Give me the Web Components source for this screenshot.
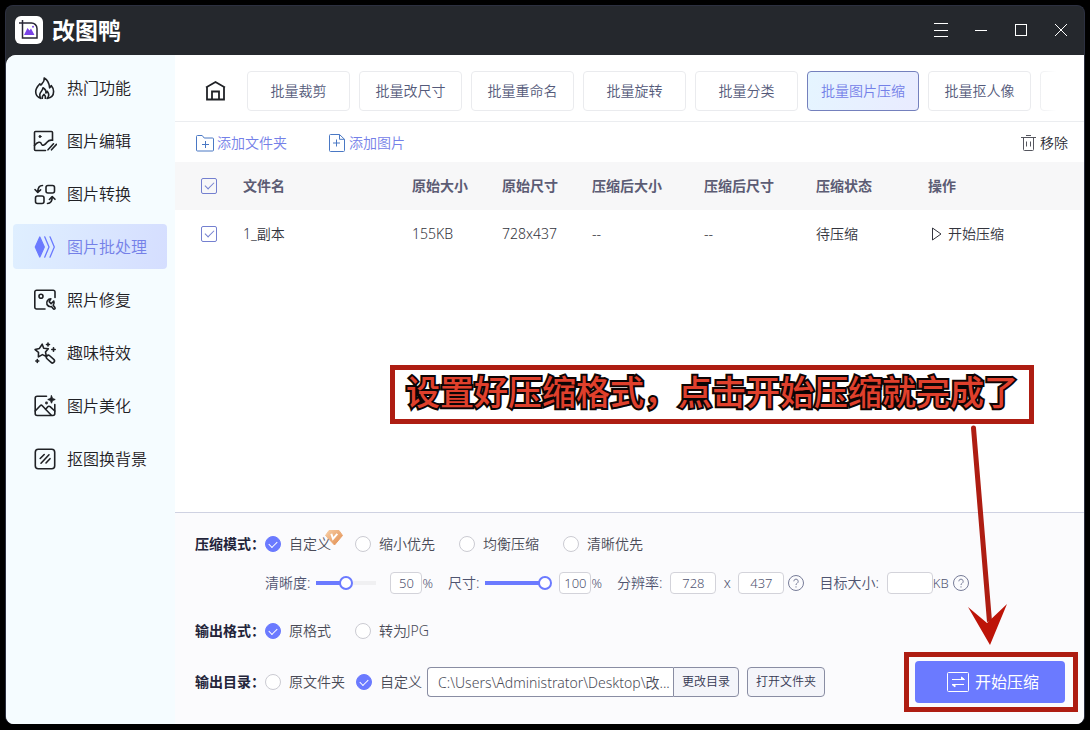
<!DOCTYPE html>
<html lang="zh-CN">
<head>
<meta charset="utf-8">
<meta name="viewport" content="width=device-width, initial-scale=1">
<title>改图鸭</title>
<style>
  body {
    margin: 0;
    background: #000;
    font-family: "Noto Sans", "Noto Sans CJK SC", sans-serif;
    font-size: 14px;
    font-weight: 350;
    line-height: 20px;
    color: #33343d;
    --accent: #6b7aff;
    --mark: #ae1d12;
  }
</style>
</head>
<body>
<app-window>
  <title-bar slot="title">改图鸭</title-bar>
  <side-nav slot="side">
    <nav-item icon="fire">热门功能</nav-item>
    <nav-item icon="edit">图片编辑</nav-item>
    <nav-item icon="convert">图片转换</nav-item>
    <nav-item icon="batch" active>图片批处理</nav-item>
    <nav-item icon="repair">照片修复</nav-item>
    <nav-item icon="magic">趣味特效</nav-item>
    <nav-item icon="beauty">图片美化</nav-item>
    <nav-item icon="cutout">抠图换背景</nav-item>
  </side-nav>
  <tab-strip>
    <tab-item>批量裁剪</tab-item>
    <tab-item>批量改尺寸</tab-item>
    <tab-item>批量重命名</tab-item>
    <tab-item>批量旋转</tab-item>
    <tab-item>批量分类</tab-item>
    <tab-item active>批量图片压缩</tab-item>
    <tab-item>批量抠人像</tab-item>
    <tab-item></tab-item>
  </tab-strip>
  <file-toolbar></file-toolbar>
  <file-table></file-table>
  <compress-settings></compress-settings>
  <guide-note slot="overlay">设置好压缩格式，点击开始压缩就完成了</guide-note>
</app-window>

<script>
const ICONS = {
  fire: `<path d="M11.200 2c.5 2.800-1 4.300-2.400 6C7.900 9.400 7 9 6.900 7.700 4.200 10.500 2.700 13 2.700 15.800c0 3.400 2.300 5.800 5.300 6.600-1-1.200-1.500-2.400-1.200-4C7.300 16 9.600 14.500 10 11.800c2.600 1.500 3.200 3.200 2.900 5.200.7-.4 1.100-1 1.300-1.800 2.100 2.700 1.900 5.300-.1 7.200 3.800-.5 6.500-3 6.500-6.900 0-2.700-1.200-4.500-2.400-5.900-.3 1-.8 1.700-1.600 2.200C16.300 7.500 14.700 4 11.200 2z"/><path d="M9.300 22.300c-.4-1.800.4-2.800 1.700-3.900 1.400 1.200 1.800 2.500 1.300 3.900"/>`,
  edit: `<path d="M19.500 11V3.500a1 1 0 0 0-1-1h-16a1 1 0 0 0-1 1v17a1 1 0 0 0 1 1h10"/><circle cx="7" cy="7.500" r="1" fill="currentColor" stroke-width="1"/><path d="M1.500 16.500c3-3.800 6-4.300 7-1.500 1 2.500 3.500.8 5.500-1.700 1.500-1.800 3.500-2.500 5.500-2M15 20.800l5.500-6M18.500 20.800l5-5.500"/>`,
  convert: `<rect x="13" y="3.500" width="8.500" height="7.500" rx="2"/><rect x="2.500" y="14" width="8.500" height="7.500" rx="2"/><path d="M9.500 3.500C6 3.500 4.800 6 4.800 10M2 7.500l2.800 3 2.800-2.600M14.500 21.500c3.500 0 4.700-2.500 4.700-6.500M16.400 17.500l2.800-3 2.800 2.800"/>`,
  batch: `<path d="M6.800 2l4.500 10-4.500 10L2.300 12z" fill="currentColor"/><path d="M11.700 1.800L16 12l-4.300 10.200M17 1.800L21.300 12 17 22.200"/>`,
  repair: `<path d="M22 9.500V4a1.800 1.800 0 0 0-1.800-1.800H3.600A1.800 1.800 0 0 0 1.800 4v15.200A1.800 1.800 0 0 0 3.600 21h8.400"/><circle cx="8" cy="8.300" r="2"/><path d="M17.800 10.800a4.200 4.200 0 0 0-3.800 5.700 4.200 4.200 0 0 0 4.400 2.100l1.900 2.200a1 1 0 0 0 1.600-1.300l-1.700-2.200a4.200 4.200 0 0 0 .6-4.200l-2.700 2.500-1.900-1.900z"/>`,
  magic: `<path d="M9.200 3.200l1.500 4.100 4.600.4-2.800 3.400.9 4.400-4-1.900-4 2.300.1-4.500-3.400-2.800 4.300-1.200z"/><rect x="12.600" y="15.800" width="9.500" height="4" rx="2" transform="rotate(42 17 18)"/><path d="M15 2v3M13.500 3.500h3M20.500 6.800v3.400M18.800 8.500h3.400M4.300 18.500v3M2.800 20h3"/>`,
  beauty: `<path d="M13.500 2.300H4.200a2 2 0 0 0-2 2v15.200a2 2 0 0 0 2 2h15.600a2 2 0 0 0 2-2v-9"/><path d="M2.200 17l5-5.300a1.500 1.500 0 0 1 2.100 0l9 9.500M12.500 15.500l2.300-2.700a1.600 1.600 0 0 1 2.300-.1l4.700 4.300"/><path d="M18.500 1.800l1 2.700 2.700 1-2.700 1-1 2.700-1-2.700-2.700-1 2.700-1z" fill="currentColor" stroke-width="1"/><circle cx="13.500" cy="9" r=".6"/>`,
  cutout: `<rect x="2.300" y="2.300" width="19.400" height="19.400" rx="3"/><path d="M7.200 11.500l4-4M8 16.200l8-8.400M13 16l4-4.300"/>`
};

class AppWindow extends HTMLElement {
  constructor() {
    super();
    this.attachShadow({ mode: 'open' });
    this.shadowRoot.innerHTML = `
      <style>
        :host {
          box-sizing: border-box;
          display: block;
          min-height: 100vh;
          padding: 5px 5px 6px;
        }
        .window {
          position: relative;
          box-sizing: border-box;
          display: flex;
          flex-direction: column;
          min-height: calc(100vh - 11px);
          background: #25282d;
          border: 1px solid #2c3040;
          border-bottom: 0;
          border-radius: 8px;
        }
        .body {
          flex: 1;
          display: flex;
          overflow: hidden;
          background: #fff;
          border-radius: 10px 0 8px 8px;
        }
        main {
          flex: 1;
          min-width: 0;
          display: flex;
          flex-direction: column;
        }
      </style>
      <div class="window">
        <slot name="title"></slot>
        <div class="body">
          <slot name="side"></slot>
          <main><slot></slot></main>
        </div>
        <slot name="overlay"></slot>
      </div>
    `;
  }
}

class TitleBar extends HTMLElement {
  constructor() {
    super();
    this.attachShadow({ mode: 'open' });
    this.shadowRoot.innerHTML = `
      <style>
        :host {
          box-sizing: border-box;
          display: flex;
          align-items: center;
          height: 49px;
          padding: 0 3px 1px 9px;
          color: #fff;
        }
        .name {
          margin-left: 9px;
          flex: 1;
          font-size: 23px;
          line-height: 28px;
          font-weight: 700;
        }
        button {
          width: 40px;
          height: 40px;
          padding: 0;
          border: 0;
          background: none;
          color: inherit;
        }
        button:hover { background: #3a3e45; }
        button svg { display: block; margin: auto; }
      </style>
      <svg width="28" height="28" viewBox="0 0 28 28" fill="none">
        <rect width="28" height="28" rx="6" fill="#fff"/>
        <path d="M4 7h12.500a5.500 5.500 0 0 1 5.500 5.500V22H7.500V4" stroke="#292735" stroke-width="1.500"/>
        <path d="M9 19l3.500-7 2 2.500 1.500-2 3.500 6.500z" fill="#7a43e6"/>
        <circle cx="18" cy="10.800" r="1" fill="#7a43e6"/>
      </svg>
      <span class="name"><slot></slot></span>
      <button aria-label="菜单"><svg width="14" height="14" stroke="currentColor"><path d="M0 .5h14M0 7.500h14M0 13.500h14"/></svg></button>
      <button aria-label="最小化"><svg width="12" height="12" stroke="currentColor"><path d="M0 6.500h12"/></svg></button>
      <button aria-label="最大化"><svg width="12" height="12" stroke="currentColor" fill="none"><rect x=".5" y=".5" width="11" height="11"/></svg></button>
      <button aria-label="关闭"><svg width="12" height="12" stroke="currentColor"><path d="M0 0l12 12M12 0L0 12"/></svg></button>
    `;
  }
}

class SideNav extends HTMLElement {
  constructor() {
    super();
    this.attachShadow({ mode: 'open' });
    this.shadowRoot.innerHTML = `
      <style>
        :host {
          flex: none;
          box-sizing: border-box;
          width: 169px;
          padding: 10px 8px 10px 7px;
          background: #f5fcff;
        }
        nav {
          display: flex;
          flex-direction: column;
          gap: 8px;
        }
      </style>
      <nav><slot></slot></nav>
    `;
  }
}

class NavItem extends HTMLElement {
  constructor() {
    super();
    this.attachShadow({ mode: 'open' });
    this.shadowRoot.innerHTML = `
      <style>
        :host { display: block; }
        a {
          display: flex;
          align-items: center;
          gap: 10px;
          height: 45px;
          padding-left: 20px;
          border-radius: 4px;
          color: #1f2125;
          font-size: 16px;
          text-decoration: none;
        }
        svg {
          flex: none;
          fill: none;
          stroke: currentColor;
          stroke-width: 1.6;
          stroke-linecap: round;
          stroke-linejoin: round;
        }
        :host([active]) a {
          background: linear-gradient(100deg, #dfefff, #d5deff);
          color: #7480e8;
        }
        :host([active]) svg {
          color: var(--accent);
          stroke-width: 1.3;
        }
      </style>
      <a href="#"><svg width="24" height="24" viewBox="0 0 24 24">${ICONS[this.getAttribute('icon')]}</svg><slot></slot></a>
    `;
  }
}

class TabStrip extends HTMLElement {
  constructor() {
    super();
    this.attachShadow({ mode: 'open' });
    this.shadowRoot.innerHTML = `
      <style>
        :host {
          flex: none;
          box-sizing: border-box;
          display: flex;
          align-items: center;
          gap: 20px;
          height: 67px;
          padding: 6px 28px 0;
          border-bottom: 1px solid #ebedf0;
        }
        .home {
          flex: none;
          width: 24px;
          height: 24px;
          padding: 0;
          border: 0;
          background: none;
          color: #202226;
        }
        .home svg { display: block; }
        .tabs {
          position: relative;
          flex: 1;
          display: flex;
          gap: 9px;
          overflow: hidden;
        }
        .tabs::after {
          content: "";
          position: absolute;
          inset: 0 0 0 auto;
          width: 20px;
          background: linear-gradient(90deg, #fff0, #fff);
        }
      </style>
      <button class="home" aria-label="首页">
        <svg width="24" height="24" viewBox="0 0 24 24" fill="none" stroke="currentColor" stroke-width="1.800"><path d="M3 8.500L12.500 3 22 8.500M4 8.200V20.500h17V8.200M9 20.500v-8h7v8"/></svg>
      </button>
      <div class="tabs"><slot></slot></div>
    `;
  }
}

class TabItem extends HTMLElement {
  constructor() {
    super();
    this.attachShadow({ mode: 'open' });
    this.shadowRoot.innerHTML = `
      <style>
        :host { flex: none; display: block; }
        button {
          display: block;
          box-sizing: border-box;
          min-width: 103px;
          height: 40px;
          padding: 0 13px;
          border: 1px solid #eaebee;
          border-radius: 4px;
          background: #fff;
          color: #545a7a;
          font: inherit;
        }
        :host([active]) button {
          border-color: #7480bd;
          background: linear-gradient(110deg, #e5f5ff, #e9ebff);
          color: #7480e8;
        }
      </style>
      <button><slot></slot></button>
    `;
  }
}

class FileToolbar extends HTMLElement {
  constructor() {
    super();
    this.attachShadow({ mode: 'open' });
    this.shadowRoot.innerHTML = `
      <style>
        :host {
          flex: none;
          box-sizing: border-box;
          display: flex;
          gap: 40px;
          height: 40px;
          padding: 1px 16px 0 20px;
        }
        button {
          display: flex;
          align-items: center;
          gap: 2px;
          padding: 0;
          border: 0;
          background: none;
          color: #7480e8;
          font: inherit;
        }
        svg { fill: none; stroke: #4a78c4; }
        .remove {
          margin-left: auto;
          color: #292a33;
        }
        .remove svg { stroke: #55565e; }
      </style>
      <button>
        <svg width="20" height="20" viewBox="0 0 20 20"><path d="M1.500 17V3.500a1 1 0 0 1 1-1h4.700l2 2.500h8.300a1 1 0 0 1 1 1V17a1 1 0 0 1-1 1h-15a1 1 0 0 1-1-1zM10.500 8v7M7 11.500h7"/></svg>
        添加文件夹
      </button>
      <button>
        <svg width="20" height="20" viewBox="0 0 20 20"><path d="M12.500 1.500h-9a1 1 0 0 0-1 1v15a1 1 0 0 0 1 1h13a1 1 0 0 0 1-1V6.300zM12.500 1.500v4.800h5M9.500 6.500v7M6 10h7"/></svg>
        添加图片
      </button>
      <button class="remove">
        <svg width="18" height="18" viewBox="0 0 18 18"><path d="M1 3.500h15M6 1.500h5M3.500 3.500v12a1 1 0 0 0 1 1h8a1 1 0 0 0 1-1v-12M6.500 7.500v5M10.500 7.500v5"/></svg>
        移除
      </button>
    `;
  }
}

class FileTable extends HTMLElement {
  constructor() {
    super();
    this.attachShadow({ mode: 'open' });
    this.shadowRoot.innerHTML = `
      <style>
        :host {
          flex: 1;
          display: block;
        }
        table {
          width: 100%;
          border-collapse: collapse;
          table-layout: fixed;
        }
        th, td {
          height: 48px;
          padding: 0 8px;
          text-align: left;
          box-sizing: border-box;
        }
        th {
          background: #f7f7f8;
          color: #5c5c74;
          font-weight: 600;
        }
        td { color: #33343d; }
        .check { width: 60px; padding-left: 26px; }
        .s { width: 90px; }
        .m { width: 112px; }
        .l { width: 164px; }
        input {
          appearance: none;
          display: grid;
          place-items: center;
          width: 16px;
          height: 16px;
          margin: 0;
          border: 1px solid #7480d0;
          border-radius: 2px;
          box-sizing: border-box;
        }
        input:checked::after {
          content: "";
          width: 9px;
          height: 5px;
          margin-top: -3px;
          border: solid #7480d0;
          border-width: 0 0 1px 1px;
          box-sizing: border-box;
          transform: rotate(-45deg);
        }
        button {
          display: flex;
          align-items: center;
          gap: 4px;
          padding: 0;
          border: 0;
          background: none;
          color: inherit;
          font: inherit;
        }
        svg { fill: none; stroke: currentColor; }
      </style>
      <table>
        <thead>
          <tr>
            <th class="check"><input type="checkbox" aria-label="全选" checked></th>
            <th>文件名</th>
            <th class="s">原始大小</th>
            <th class="s">原始尺寸</th>
            <th class="m">压缩后大小</th>
            <th class="m">压缩后尺寸</th>
            <th class="m">压缩状态</th>
            <th class="l">操作</th>
          </tr>
        </thead>
        <tbody>
          <tr>
            <td class="check"><input type="checkbox" aria-label="选择 1_副本" checked></td>
            <td>1_副本</td>
            <td>155KB</td>
            <td>728x437</td>
            <td>--</td>
            <td>--</td>
            <td>待压缩</td>
            <td><button><svg width="16" height="16"><path d="M4.500 2l8.500 6-8.500 6z"/></svg>开始压缩</button></td>
          </tr>
        </tbody>
      </table>
    `;
  }
}

class CompressSettings extends HTMLElement {
  constructor() {
    super();
    this.attachShadow({ mode: 'open' });
    const help = `
      <svg class="help" width="16" height="16" viewBox="0 0 16 16"><circle cx="8" cy="8" r="7.500"/><path d="M5.800 6.300a2.200 2.200 0 1 1 3.400 1.900c-.8.500-1.200.9-1.200 1.800M8 11.300v1.200"/></svg>`;
    this.shadowRoot.innerHTML = `
      <style>
        :host {
          flex: none;
          display: block;
          padding: 15px 19px 21px 20px;
          border-top: 1px solid #cfd2e2;
          background: #fbfbfd;
          color: #4a4b57;
        }
        .row {
          display: flex;
          align-items: center;
          height: 32px;
        }
        .sub {
          height: 46px;
          margin-bottom: 9px;
          padding-left: 70px;
          color: #4f5470;
        }
        .last {
          height: 42px;
          margin-top: 14px;
        }
        .group {
          width: 70px;
          flex: none;
          color: #23243a;
          font-weight: 600;
        }
        .choices { display: flex; gap: 24px; }
        .tight { gap: 11px; }
        .choices label {
          position: relative;
          display: flex;
          align-items: center;
          gap: 8px;
        }
        input, button { font: inherit; box-sizing: border-box; }
        input[type=radio] {
          appearance: none;
          display: grid;
          place-items: center;
          width: 16px;
          height: 16px;
          margin: 0;
          border: 1px solid #cbcbd2;
          border-radius: 50%;
          background: #fff;
        }
        input[type=radio]:checked {
          border-color: var(--accent);
          background: var(--accent);
        }
        input[type=radio]:checked::after {
          content: "";
          width: 8px;
          height: 5px;
          margin-top: -2px;
          border: solid #fff;
          border-width: 0 0 1px 1px;
          box-sizing: border-box;
          transform: rotate(-45deg);
        }
        .vip {
          position: absolute;
          top: -4px;
          right: -12px;
        }
        input[type=range] {
          appearance: none;
          flex: none;
          width: 74px;
          height: 14px;
          margin: 0 7px 0 -1px;
          background: linear-gradient(90deg, var(--accent) var(--fill), #f0f0f2 var(--fill)) center / 60px 4px no-repeat;
        }
        input[type=range]::-webkit-slider-thumb {
          appearance: none;
          width: 14px;
          height: 14px;
          border: 2px solid var(--accent);
          border-radius: 50%;
          background: #fff;
          box-sizing: border-box;
        }
        .num {
          width: 46px;
          height: 22px;
          padding: 0;
          border: 1px solid #d3d3da;
          border-radius: 4px;
          background: #fff;
          color: #4f5470;
          font-size: 13px;
          text-align: center;
        }
        .unit { font-size: 13px; }
        .pct { width: 32px; }
        .pct + .unit { margin-right: 15px; }
        .res { margin-left: 8px; }
        .by { width: 22px; text-align: center; }
        .help {
          margin: 0 15px 0 4px;
          fill: none;
          stroke: #777c98;
        }
        .path {
          width: 246px;
          height: 30px;
          margin-left: 5px;
          padding: 0 2px 0 10px;
          border: 1px solid #898da3;
          border-right: 0;
          border-radius: 4px 0 0 4px;
          background: #fff;
          color: #4a4b57;
        }
        .plain {
          height: 30px;
          padding: 0 8px;
          border: 1px solid #898da3;
          border-radius: 4px;
          background: #f4f5fa;
          color: #343852;
          font-size: 12px;
        }
        .change { border-radius: 0 4px 4px 0; }
        .open { margin-left: 8px; }
        .start {
          display: flex;
          align-items: center;
          justify-content: center;
          gap: 6px;
          width: 150px;
          height: 42px;
          margin-left: auto;
          padding: 0 0 0 6px;
          border: 0;
          border-radius: 4px;
          background: var(--accent);
          color: #fff;
          font-size: 16px;
          font-weight: 400;
        }
      </style>
      <div class="row" role="radiogroup" aria-labelledby="mode">
        <span class="group" id="mode">压缩模式：</span>
        <div class="choices">
          <label><input type="radio" name="mode" checked>自定义
            <svg class="vip" width="18" height="16" viewBox="0 0 18 16">
              <defs><linearGradient id="gold" x2="1" y2="1"><stop stop-color="#f8cfa6"/><stop offset="1" stop-color="#e08a4c"/></linearGradient></defs>
              <path d="M4 .5h10l3.500 5L9.500 15 .5 5.500z" fill="url(#gold)" stroke="url(#gold)" stroke-linejoin="round"/>
              <path d="M6.300 3.800l1.700 5 4.300-5" fill="none" stroke="#fff" stroke-width="2"/>
            </svg>
          </label>
          <label><input type="radio" name="mode">缩小优先</label>
          <label><input type="radio" name="mode">均衡压缩</label>
          <label><input type="radio" name="mode">清晰优先</label>
        </div>
      </div>
      <div class="row sub">
        <label for="quality">清晰度:</label>
        <input type="range" id="quality" value="50" style="--fill:50%">
        <input class="num pct" aria-label="清晰度百分比" value="50"><span class="unit">%</span>
        <label for="scale">尺寸:</label>
        <input type="range" id="scale" value="100" style="--fill:100%">
        <input class="num pct" aria-label="尺寸百分比" value="100"><span class="unit">%</span>
        <label for="width">分辨率:</label>
        <input class="num res" id="width" value="728"><span class="by">x</span><input class="num" aria-label="高度" value="437">
        ${help}
        <label for="target">目标大小:</label>
        <input class="num res" id="target"><span class="unit">KB</span>
        ${help}
      </div>
      <div class="row" role="radiogroup" aria-labelledby="format">
        <span class="group" id="format">输出格式：</span>
        <div class="choices">
          <label><input type="radio" name="format" checked>原格式</label>
          <label><input type="radio" name="format">转为JPG</label>
        </div>
      </div>
      <div class="row last">
        <span class="group">输出目录：</span>
        <div class="choices tight">
          <label><input type="radio" name="dir">原文件夹</label>
          <label><input type="radio" name="dir" checked>自定义</label>
        </div>
        <input class="path" aria-label="输出目录" value="C:\\Users\\Administrator\\Desktop\\改...">
        <button class="plain change">更改目录</button>
        <button class="plain open">打开文件夹</button>
        <button class="start">
          <svg width="22" height="20" viewBox="0 0 22 20" fill="none" stroke="currentColor"><rect x=".5" y=".5" width="21" height="19" rx="1"/><path d="M5 7.500h12"/><path d="M17.500 7.500h-3V5zM5 12.500h3V15z" fill="currentColor"/><path d="M5 12.500h12"/></svg>
          开始压缩
        </button>
      </div>
    `;
    this.shadowRoot.querySelectorAll('input[type=range]').forEach(range => {
      range.addEventListener('input', () => {
        range.style.setProperty('--fill', range.value + '%');
        range.nextElementSibling.value = range.value;
      });
    });
  }
}

// Tutorial layer: a caption, an arrow and a frame round the start button
class GuideNote extends HTMLElement {
  constructor() {
    super();
    this.attachShadow({ mode: 'open' });
    this.shadowRoot.innerHTML = `
      <style>
        :host {
          position: absolute;
          right: 6px;
          bottom: 12px;
          display: flex;
          flex-direction: column;
          align-items: flex-end;
          pointer-events: none;
        }
        .caption {
          margin-right: 44px;
          padding: 0 11px 7px;
          border: 5px solid var(--mark);
          color: #e0402c;
          font-family: "Noto Sans CJK SC", sans-serif;
          font-size: 34px;
          font-weight: 500;
          line-height: 42px;
          white-space: nowrap;
          -webkit-text-stroke: 4px #0d0505;
          paint-order: stroke fill;
        }
        svg {
          display: block;
          margin: 0 69px 7px 0;
          fill: var(--mark);
        }
        .frame {
          width: 164px;
          height: 50px;
          border: 5px solid var(--mark);
        }
      </style>
      <div class="caption"><slot></slot></div>
      <svg width="42" height="221" viewBox="0 0 42 221">
        <path d="M4 4a2.500 2.500 0 0 1 5 0l16 193-5 1z"/>
        <path d="M1 183l19 16 20-19-17 41z" fill="#bd1408"/>
      </svg>
      <div class="frame"></div>
    `;
  }
}

customElements.define('app-window', AppWindow);
customElements.define('title-bar', TitleBar);
customElements.define('side-nav', SideNav);
customElements.define('nav-item', NavItem);
customElements.define('tab-strip', TabStrip);
customElements.define('tab-item', TabItem);
customElements.define('file-toolbar', FileToolbar);
customElements.define('file-table', FileTable);
customElements.define('compress-settings', CompressSettings);
customElements.define('guide-note', GuideNote);
</script>
</body>
</html>
